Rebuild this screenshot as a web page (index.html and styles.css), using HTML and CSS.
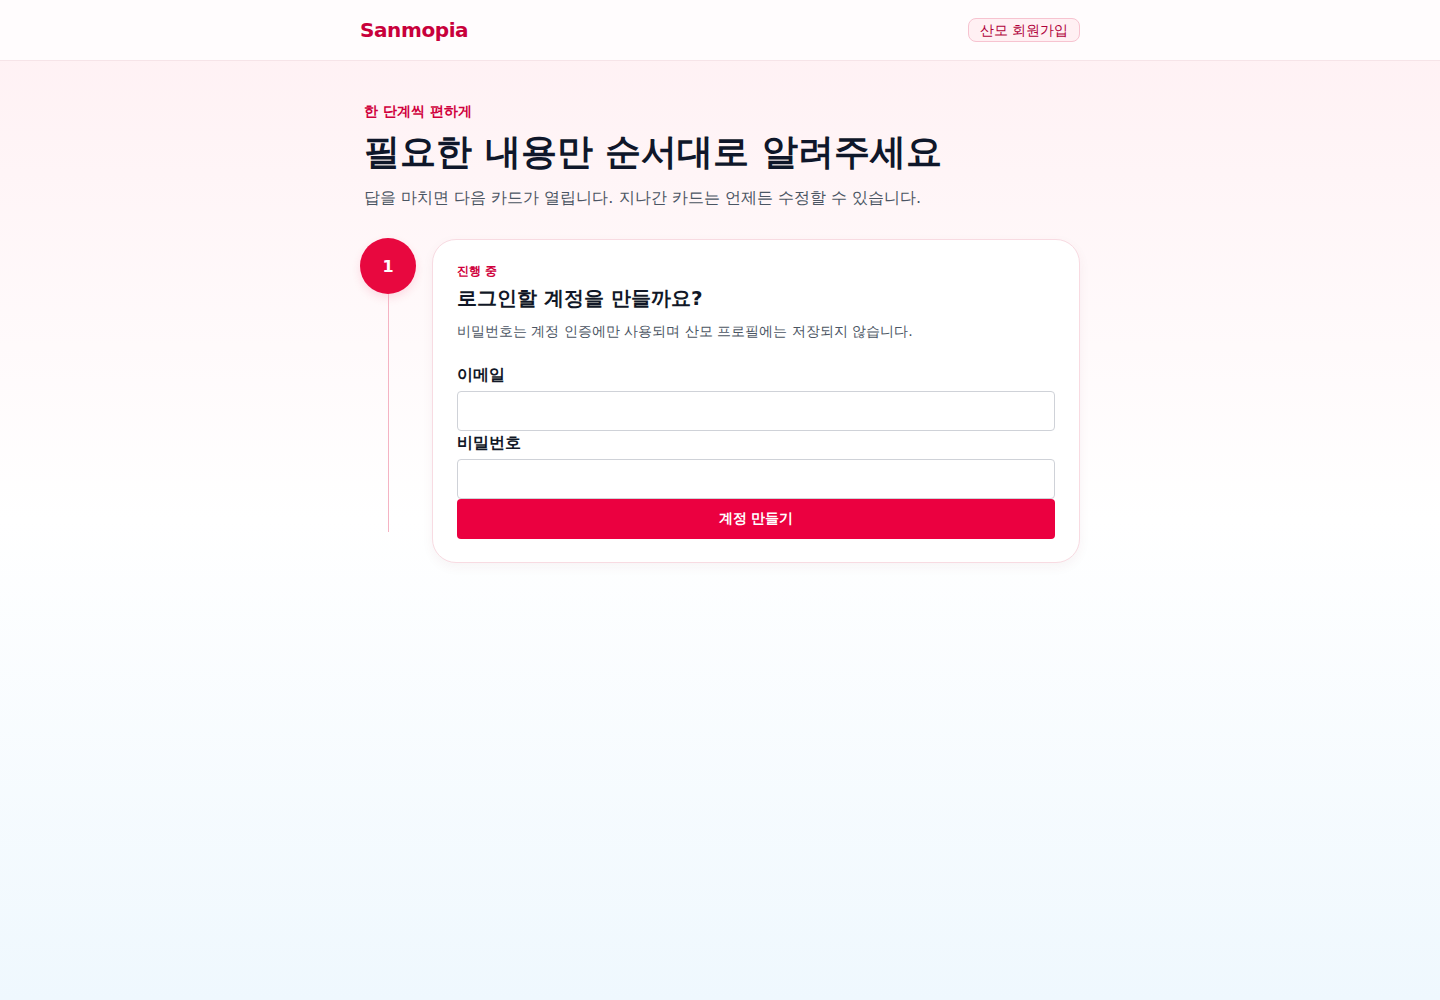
FILE: index.html
```html
<!doctype html>
<html lang="ko">
  <head>
    <meta charset="UTF-8" />
    <meta name="viewport" content="width=device-width, initial-scale=1.0" />
    <title>Sanmopia</title>
    <link rel="stylesheet" href="styles.css">
  </head>
  <body>
    <header class="topbar">
      <div class="topbar-inner">
        <a class="brand" href="#">Sanmopia</a>
        <a class="signup-link" href="#">산모 회원가입</a>
      </div>
    </header>

    <main class="page">
      <section class="hero">
        <p class="eyebrow">한 단계씩 편하게</p>
        <h1>필요한 내용만 순서대로 알려주세요</h1>
        <p class="lead">답을 마치면 다음 카드가 열립니다. 지나간 카드는 언제든 수정할 수 있습니다.</p>
      </section>

      <div class="step">
        <div class="step-rail">
          <div class="step-num">1</div>
          <div class="step-line"></div>
        </div>

        <form class="step-card" id="accountForm">
          <p class="step-status">진행 중</p>
          <h2>로그인할 계정을 만들까요?</h2>
          <p class="step-desc">비밀번호는 계정 인증에만 사용되며 산모 프로필에는 저장되지 않습니다.</p>

          <div class="fields">
            <label for="email">이메일</label>
            <input type="email" id="email" name="email" required />

            <label for="password">비밀번호</label>
            <input type="password" id="password" name="password" required />

            <button type="submit">계정 만들기</button>
          </div>
        </form>
      </div>
    </main>
  </body>
</html>
```

FILE: styles.css
```css
* {
  box-sizing: border-box;
}
html,
body {
  margin: 0;
  min-height: 100%;
}
body {
  font-family: "DejaVu Sans", sans-serif;
  color: #111827;
  background: linear-gradient(180deg, #fff0f3 0%, #ffffff 52%, #eff8fe 100%);
  min-height: 1000px;
}
a {
  text-decoration: none;
}

.topbar {
  background: #fffcfd;
  border-bottom: 1px solid #f6e4e8;
  height: 61px;
}
.topbar-inner {
  max-width: 720px;
  height: 60px;
  margin: 0 auto;
  display: flex;
  align-items: center;
  justify-content: space-between;
}
.brand {
  color: #c8003b;
  font-size: 20px;
  font-weight: bold;
  letter-spacing: -0.02em;
}
.signup-link {
  color: #b0003a;
  font-size: 14px;
  line-height: 20px;
  padding: 1px 11px;
  border: 1px solid #f7c3d0;
  border-radius: 8px;
  background: #fff0f3;
}

.page {
  max-width: 720px;
  margin: 0 auto;
  padding-top: 40px;
}
.hero {
  padding: 0 4px;
}
.eyebrow {
  margin: 0;
  color: #d0003d;
  font-size: 14px;
  line-height: 20px;
  font-weight: bold;
}
.hero h1 {
  margin: 8px 0 0;
  font-size: 36px;
  line-height: 46px;
  font-weight: bold;
  color: #0f172a;
}
.lead {
  margin: 11px 0 0;
  color: #4b5563;
  font-size: 16px;
  line-height: 24px;
}

.step {
  display: grid;
  grid-template-columns: 56px 1fr;
  gap: 16px;
  margin-top: 28px;
}
.step-rail {
  display: flex;
  flex-direction: column;
  align-items: center;
}
.step-num {
  width: 56px;
  height: 56px;
  border-radius: 50%;
  background: #e8083f;
  color: #fff;
  font-weight: bold;
  font-size: 16px;
  display: flex;
  align-items: center;
  justify-content: center;
  box-shadow: 0 4px 10px rgba(232, 8, 63, 0.12);
}
.step-line {
  flex: 1;
  width: 1px;
  background: #f5b3c3;
  margin-bottom: 31px;
}

.step-card {
  background: #fff;
  border: 1px solid #f8dbe2;
  border-radius: 24px;
  padding: 23px 24px 23px;
  margin-top: 1px;
  box-shadow: 0 4px 12px rgba(120, 30, 60, 0.05);
}
.step-status {
  margin: 0;
  color: #d0003d;
  font-size: 12px;
  line-height: 16px;
  font-weight: bold;
}
.step-card h2 {
  margin: 4px 0 0;
  font-size: 20px;
  line-height: 30px;
  font-weight: bold;
  color: #111827;
}
.step-desc {
  margin: 8px 0 0;
  color: #4b5563;
  font-size: 14px;
  line-height: 20px;
}
.fields {
  margin-top: 22px;
  display: flex;
  flex-direction: column;
}
.fields label {
  font-size: 16px;
  line-height: 24px;
  font-weight: 600;
  margin-bottom: 4px;
}
.fields input {
  height: 40px;
  width: 100%;
  border: 1px solid #cfd2d8;
  border-radius: 4px;
  padding: 8px;
  font: inherit;
  background: #fff;
}
.fields button {
  height: 40px;
  border: none;
  border-radius: 4px;
  background: #eb0040;
  color: #fff;
  font-family: inherit;
  font-size: 14px;
  font-weight: bold;
  cursor: pointer;
}
.fields button:hover {
  background: #d40039;
}
```
